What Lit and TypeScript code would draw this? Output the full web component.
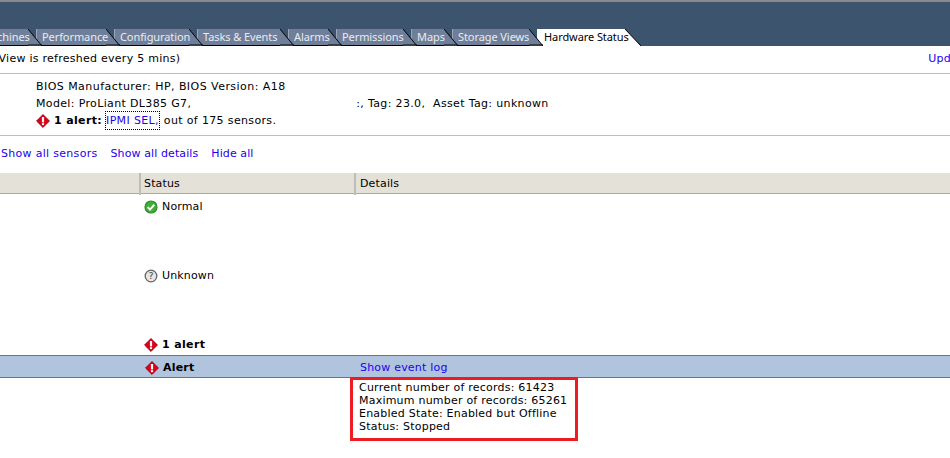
import { LitElement, html, css } from "lit";
import { customElement } from "lit/decorators.js";

const alertIcon = html`<svg class="ico" width="14" height="14" viewBox="0 0 14 14"><path d="M7 .6 13.4 7 7 13.4 .6 7Z" fill="#dc0018" stroke="#a00012" stroke-linejoin="round"/><rect x="5.9" y="3" width="2.2" height="5.4" fill="#fff"/><rect x="5.9" y="9.2" width="2.2" height="1.9" fill="#fff"/></svg>`;
const okIcon = html`<svg class="ico" width="14" height="14" viewBox="0 0 14 14"><circle cx="7" cy="7" r="6" fill="#43ad37" stroke="#2f8a2c" stroke-width="1.2"/><path d="M3.7 7.1 6 9.6 10.4 4.7" fill="none" stroke="#fff" stroke-width="2"/></svg>`;
const unknownIcon = html`<svg class="ico" width="14" height="14" viewBox="0 0 14 14"><circle cx="7" cy="7" r="5.8" fill="#e6e6e6" stroke="#666" stroke-width="1.3"/><text x="7" y="10.3" text-anchor="middle" font-size="9.5" font-family="DejaVu Sans" fill="#444">?</text></svg>`;

const tabs = [
  { t: "chines", step: 36 },
  { t: "Performance", step: 78 },
  { t: "Configuration", step: 83 },
  { t: "Tasks & Events", step: 91 },
  { t: "Alarms", step: 48 },
  { t: "Permissions", step: 75 },
  { t: "Maps", step: 41 },
  { t: "Storage Views", step: 85 },
];

@customElement("app-root")
export class AppRoot extends LitElement {
  static styles = css`
    :host { display: block; width: 950px; height: 458px; overflow: hidden; background: #fff;
      font-family: "DejaVu Sans", Verdana, sans-serif; font-size: 11px; color: #000; }
    a { color: #2200ee; text-decoration: none; }
    .ico { flex: none; display: block; }
    .top { height: 46px; box-sizing: border-box; background: #3c546d; border-top: 2px solid #8a8a8a;
      display: flex; align-items: flex-end; overflow: hidden; }
    .tab { display: flex; height: 17px; margin-right: -6px; color: #e8ecf2; flex: none; position: relative;
      font-family: "Noto Sans", sans-serif; font-size: 11px; letter-spacing: -.08px; }
    .lab { background: #6f7f99; height: 16px; line-height: 15px; border-bottom: 1px solid #000;
      border-left: 1px solid #9aa6b8; padding-left: 5px; flex: 1; min-width: 0; white-space: nowrap;
      position: relative; z-index: 1; }
    .first .lab { padding-left: 0; border-left: 0; text-indent: -3px; }
    .cap { flex: none; display: block; }
    .tab.on { color: #000; margin: 0; }
    .tab.on .lab { background: #fff; border: 0; height: 17px; padding-left: 7px; }
    .bar { height: 28px; box-sizing: border-box; border-bottom: 1px solid #bdbdbd; letter-spacing: .26px;
      display: flex; justify-content: space-between; align-items: flex-start; padding-top: 6px; white-space: nowrap; }
    .bar .l { margin-left: -6px; }
    .bar a { margin-right: -1px; }
    .info { height: 62px; box-sizing: border-box; border-bottom: 1px solid #bdbdbd; padding: 4px 0 0 36px; letter-spacing: .35px; }
    .info > div { height: 17px; line-height: 17px; white-space: pre; display: flex; align-items: center; }
    .info .bios { letter-spacing: .45px; }
    .info b { margin: 0 4px 0 4px; }
    .focus { outline: 1px dotted #000; margin-right: 5px; }
    .gap { display: inline-block; width: 165px; }
    .links { display: flex; gap: 13px; padding: 11px 0 0 1px; height: 17px; margin-bottom: 9px; line-height: 14px; letter-spacing: .1px; }
    .links a:first-child { letter-spacing: .3px; }
    .thead, .row { display: grid; grid-template-columns: 139px 215px 1fr; }
    .thead { height: 21px; box-sizing: border-box; background: #e4e1d9; border-bottom: 1px solid #a9a9a9; line-height: 22px; letter-spacing: .15px; }
    .thead > div + div { border-left: 2px solid #c0bdb5; padding-left: 3px; }
    .thead > div:last-child { padding-left: 4px; }
    .row { align-items: start; height: 69px; letter-spacing: .15px; }
    .cell { display: flex; align-items: center; gap: 4px; padding: 6px 0 0 5px; height: 14px; line-height: 14px; }
    .row.short { height: 23px; letter-spacing: .35px; }
    .row.sel { height: 23px; box-sizing: border-box; padding-top: 2px; background: #b0c4de; border-top: 1px solid #4a7cab; border-bottom: 1px solid #4a7cab; align-items: center; letter-spacing: .2px; }
    .sel .cell { padding: 0 0 0 6px; }
    .sel a { padding-left: 6px; }
    .box { display: grid; grid-template-columns: 350px auto; justify-content: start; margin-top: -1px; }
    .red { border: 3px solid #ed1c24; padding: 1px 0 0 6px; line-height: 13px; white-space: nowrap; height: 57px; width: 216px; letter-spacing: .22px; }
  `;

  render() {
    return html`
      <div class="top">
        ${tabs.map((x, i) => html`<div class="tab ${i === 0 ? "first" : ""}" style="width:${x.step + 6}px;z-index:${20 - i}">
          <div class="lab">${x.t}</div>
          <svg class="cap" width="14" height="17" viewBox="0 0 14 17"><path d="M0 0 14 17H0Z" fill="#6f7f99"/><path d="M0 16H14M0 0 14 17" fill="none" stroke="#000"/></svg>
        </div>`)}
        <div class="tab on" style="width:104px">
          <div class="lab">Hardware Status</div>
          <svg class="cap" width="16" height="17" viewBox="0 0 16 17"><path d="M0 0 16 17H0Z" fill="#fff"/><path d="M0 0 16 17" fill="none" stroke="#000"/></svg>
        </div>
      </div>
      <div class="bar"><span class="l">(View is refreshed every 5 mins)</span><a href="#">Upd</a></div>
      <div class="info">
        <div class="bios">BIOS Manufacturer: HP, BIOS Version: A18</div>
        <div>Model: ProLiant DL385 G7,<span class="gap"></span>:, Tag: 23.0,  Asset Tag: unknown</div>
        <div>${alertIcon}<b>1 alert:</b><a class="focus" href="#">IPMI SEL,</a>out of 175 sensors.</div>
      </div>
      <div class="links"><a href="#">Show all sensors</a><a href="#">Show all details</a><a href="#">Hide all</a></div>
      <div class="thead"><div></div><div>Status</div><div>Details</div></div>
      <div class="row"><div></div><div class="cell">${okIcon}<span>Normal</span></div></div>
      <div class="row"><div></div><div class="cell">${unknownIcon}<span>Unknown</span></div></div>
      <div class="row short"><div></div><div class="cell">${alertIcon}<b>1 alert</b></div></div>
      <div class="row sel"><div></div><div class="cell">${alertIcon}<b>Alert</b></div><a href="#">Show event log</a></div>
      <div class="box"><div></div><div class="red">Current number of records: 61423<br>Maximum number of records: 65261<br>Enabled State: Enabled but Offline<br>Status: Stopped</div></div>
    `;
  }
}
